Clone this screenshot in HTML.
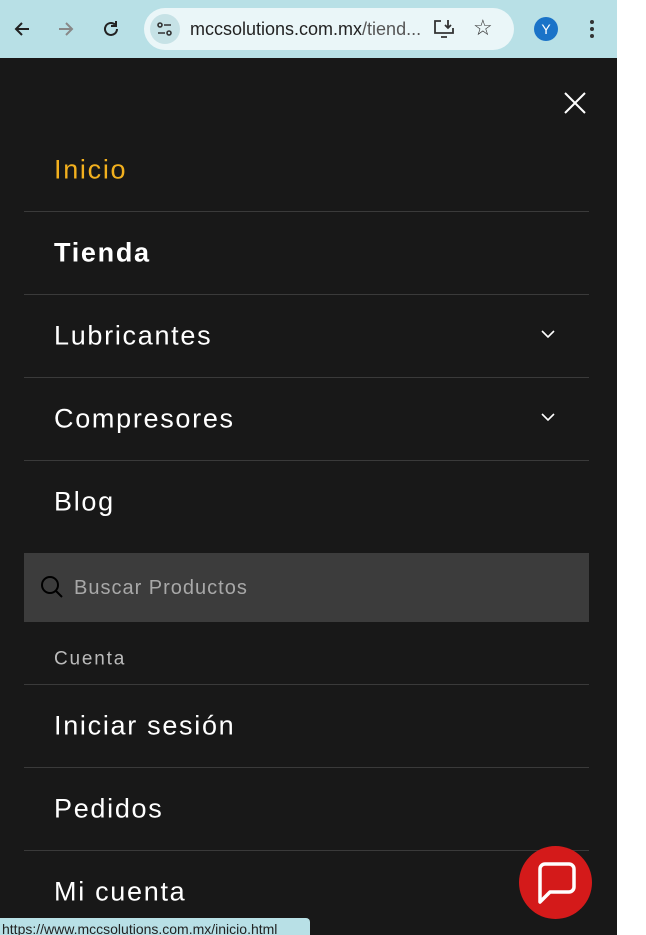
<!DOCTYPE html>
<html><head><meta charset="utf-8"><style>
*{margin:0;padding:0;box-sizing:border-box}
body{width:646px;height:935px;overflow:hidden;background:#fff;font-family:"Liberation Sans",sans-serif;position:relative}
.bar{position:absolute;left:0;top:0;width:617px;height:58px;background:#b8e0e6}
.page{position:absolute;left:0;top:58px;width:617px;height:877px;background:#181818}
.t{position:absolute;left:54px;color:#fff;font-size:27px;line-height:1;transform:translateY(-50%);letter-spacing:1.7px;white-space:nowrap}
.d{position:absolute;left:24px;width:565px;height:1px;background:#3a3a3a}
.chev{position:absolute;left:540px}
</style></head><body>
<div class="bar">
 <svg style="position:absolute;left:12px;top:19px" width="20" height="20" viewBox="0 0 20 20"><path d="M17 10H4M10 4L4 10l6 6" stroke="#222" stroke-width="2" fill="none"/></svg>
 <svg style="position:absolute;left:56px;top:19px" width="20" height="20" viewBox="0 0 20 20"><path d="M3 10h13M10 4l6 6-6 6" stroke="#888" stroke-width="2" fill="none"/></svg>
 <svg style="position:absolute;left:101px;top:19px" width="20" height="20" viewBox="0 0 20 20"><path d="M16 10a6 6 0 1 1-2-4.5" stroke="#222" stroke-width="2" fill="none"/><path d="M15 2v5h-5" stroke="#222" stroke-width="2" fill="none"/></svg>
 <div style="position:absolute;left:144px;top:8px;width:370px;height:42px;border-radius:21px;background:#eaf6f8"></div>
 <div style="position:absolute;left:150px;top:14px;width:30px;height:30px;border-radius:15px;background:#c6e2e6"></div>
 <svg style="position:absolute;left:156px;top:20px" width="18" height="18" viewBox="0 0 18 18"><circle cx="4" cy="5" r="2" fill="none" stroke="#333" stroke-width="1.6"/><path d="M8 5h7M2 13h7" stroke="#333" stroke-width="1.6"/><circle cx="13" cy="13" r="2" fill="none" stroke="#333" stroke-width="1.6"/></svg>
 <div style="position:absolute;left:190px;top:19px;font-size:18px;color:#222">mccsolutions.com.mx<span style="color:#555">/tiend...</span></div>
 <svg style="position:absolute;left:433px;top:19px" width="22" height="20" viewBox="0 0 22 20"><path d="M8 2H2v12h18V9" stroke="#333" stroke-width="1.8" fill="none"/><path d="M15 1v8M12 6l3 3 3-3M8 18h6" stroke="#333" stroke-width="1.8" fill="none"/></svg>
 <div style="position:absolute;left:473px;top:15px;font-size:22px;color:#333">☆</div>
 <div style="position:absolute;left:534px;top:17px;width:24px;height:24px;border-radius:12px;background:#1a73c8;color:#fff;font-size:14px;text-align:center;line-height:24px">Y</div>
 <div style="position:absolute;left:590px;top:20px;width:4px;height:4px;border-radius:2px;background:#333;box-shadow:0 7px 0 #333,0 14px 0 #333"></div>
</div>
<div class="page"></div>
<svg style="position:absolute;left:564px;top:92px" width="22" height="22" viewBox="0 0 22 22"><path d="M1 1l20 20M21 1L1 21" stroke="#fff" stroke-width="2"/></svg>
<div class="t" style="top:170px;color:#f2b01e">Inicio</div>
<div class="d" style="top:211px"></div>
<div class="t" style="top:253px;font-weight:bold">Tienda</div>
<div class="d" style="top:294px"></div>
<div class="t" style="top:336px">Lubricantes</div>
<svg class="chev" style="top:329px" width="16" height="11" viewBox="0 0 16 11"><path d="M2 2l6 6 6-6" stroke="#fff" stroke-width="1.6" fill="none"/></svg>
<div class="d" style="top:377px"></div>
<div class="t" style="top:419px">Compresores</div>
<svg class="chev" style="top:412px" width="16" height="11" viewBox="0 0 16 11"><path d="M2 2l6 6 6-6" stroke="#fff" stroke-width="1.6" fill="none"/></svg>
<div class="d" style="top:460px"></div>
<div class="t" style="top:502px">Blog</div>
<div style="position:absolute;left:24px;top:553px;width:565px;height:69px;background:#3c3c3c"></div>
<svg style="position:absolute;left:40px;top:575px" width="24" height="24" viewBox="0 0 24 24"><circle cx="10" cy="10" r="8" stroke="#000" stroke-width="2" fill="none"/><path d="M16 16l6 6" stroke="#000" stroke-width="2"/></svg>
<div class="t" style="top:588px;left:74px;font-size:20px;color:#a8a8a8;letter-spacing:1px">Buscar Productos</div>
<div class="t" style="top:659px;font-size:19px;color:#bbb;letter-spacing:1.8px">Cuenta</div>
<div class="d" style="top:684px"></div>
<div class="t" style="top:726px">Iniciar sesión</div>
<div class="d" style="top:767px"></div>
<div class="t" style="top:809px">Pedidos</div>
<div class="d" style="top:850px"></div>
<div class="t" style="top:892px">Mi cuenta</div>
<div style="position:absolute;left:519px;top:846px;width:73px;height:73px;border-radius:50%;background:#d41a1a"></div>
<svg style="position:absolute;left:537px;top:861px" width="40" height="44" viewBox="0 0 40 44"><path d="M3 41V8a5 5 0 0 1 5-5h24a5 5 0 0 1 5 5v18a5 5 0 0 1-5 5H13z" stroke="#fff" stroke-width="3.5" fill="none" stroke-linejoin="round"/></svg>
<div style="position:absolute;left:0;top:918px;width:310px;height:17px;background:#b8e0e6;border-top-right-radius:4px;font-size:14px;color:#222;padding-left:2px;line-height:22px;overflow:hidden;white-space:nowrap">https://www.mccsolutions.com.mx/inicio.html</div>
</body></html>
